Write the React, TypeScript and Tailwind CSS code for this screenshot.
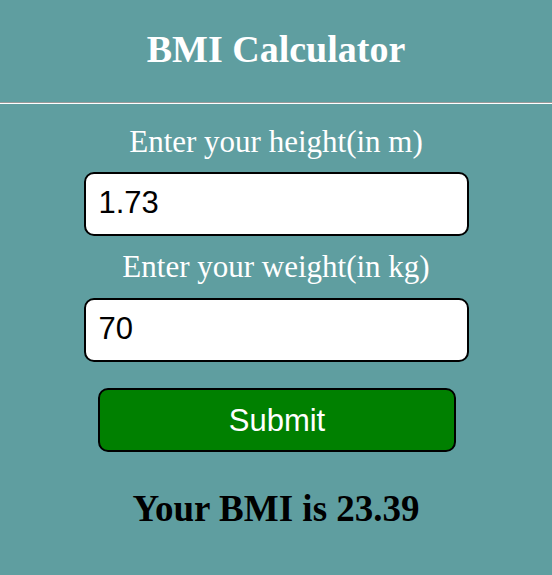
export default function App() {
  const sans = { fontFamily: '"Liberation Sans", Arial, sans-serif' };
  return (
    <div className="w-[552px] h-[575px] bg-[#5f9ea0] overflow-hidden" style={{ fontFamily: '"Liberation Serif", "Times New Roman", serif' }}>
      <div className="h-[102px] pt-[30px] text-center">
        <h1 className="text-[38px] font-bold text-white leading-none">BMI Calculator</h1>
      </div>
      <div className="border-t border-t-[#9a9a9a] border-b border-b-white" />
      <div className="flex flex-col items-center">
        <div className="mt-[22px] text-[31px] text-white leading-[31px]">Enter your height(in m)</div>
        <input
          readOnly
          value="1.73"
          className="mt-[15px] w-[385px] h-[64px] bg-white border-2 border-black rounded-[10px] pl-[13px] pr-[11px] pb-[2px] text-[31px] text-black outline-none"
          style={sans}
        />
        <div className="mt-[15px] text-[31px] text-white leading-[31px]">Enter your weight(in kg)</div>
        <input
          readOnly
          value="70"
          className="mt-[16px] w-[385px] h-[64px] bg-white border-2 border-black rounded-[10px] pl-[13px] pr-[11px] pb-[2px] text-[31px] text-black outline-none"
          style={sans}
        />
        <button
          className="mt-[26px] ml-[2px] w-[358px] h-[64px] bg-[#008000] border-2 border-black rounded-[10px] text-[31px] text-white leading-none"
          style={sans}
        >
          Submit
        </button>
        <div className="mt-[38px] text-[37px] font-bold text-black leading-none">Your BMI is 23.39</div>
      </div>
    </div>
  );
}
